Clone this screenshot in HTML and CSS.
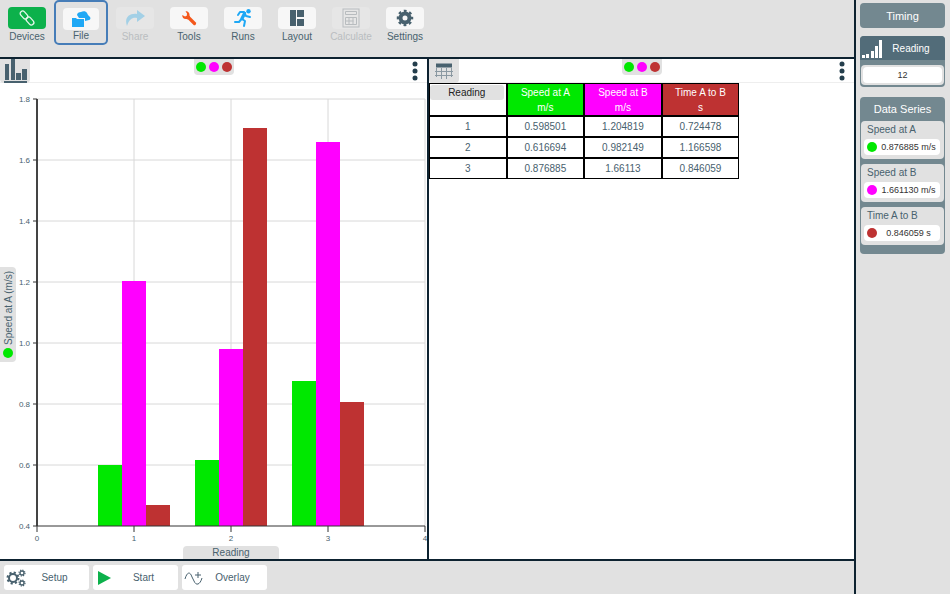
FILE: index.html
```html
<!DOCTYPE html>
<html lang="en">
  <head>
    <meta charset="UTF-8" />
    <meta name="viewport" content="width=device-width, initial-scale=1" />
    <title>Timing | Readings</title>
    <link rel="stylesheet" href="styles.css">
  </head>
  <body>
    <div class="workspace">
      <!-- Toolbar -->
      <nav class="toolbar">
        <button class="tool devices">
          <span class="tool-icon">
            <svg width="18" height="18" viewBox="0 0 18 18" fill="none" stroke="#e6f7ec" stroke-width="1.3" stroke-linecap="round">
              <rect x="1.500" y="3.500" width="9" height="5" rx="2.500" transform="rotate(48 6 6)" />
              <rect x="7.500" y="9.500" width="9" height="5" rx="2.500" transform="rotate(48 12 12)" />
            </svg>
          </span>
          <span>Devices</span>
        </button>
        <button class="tool selected">
          <span class="tool-icon">
            <svg width="20" height="18" viewBox="0 0 20 18" fill="#1fa8f5">
              <path d="M1 8h4l1 1h7v8H1z" />
              <path d="M6 5c0-2 2-3 4-3 2-1 5-1 6 1l1 2 2 2c1 1 0 3-1 3l-4 1V8H8z" />
            </svg>
          </span>
          <span>File</span>
        </button>
        <button class="tool" disabled>
          <span class="tool-icon">
            <svg width="20" height="18" viewBox="0 0 20 18" fill="#a3d0e6">
              <path d="M12 1l8 6-8 6V9C8 8 4 10 2 17-1 9 4 4 12 5z" />
            </svg>
          </span>
          <span>Share</span>
        </button>
        <button class="tool">
          <span class="tool-icon">
            <svg width="16" height="16" viewBox="0 0 16 16">
              <path d="M7 7l6.500 6.500" stroke="#f4581c" stroke-width="3.200" stroke-linecap="round" />
              <path d="M4.500 1.200C7 1 9 3 8.500 5.500L9 7 7 9.500 5.500 9C3 9.500 1 7.500 1.200 5L4 6.500 5.800 5.800 6 3.500z" fill="#f4581c" />
            </svg>
          </span>
          <span>Tools</span>
        </button>
        <button class="tool">
          <span class="tool-icon">
            <svg width="20" height="20" viewBox="0 0 20 20" fill="none" stroke="#1fa8f5" stroke-width="2" stroke-linecap="round" stroke-linejoin="round">
              <circle cx="15.500" cy="3.200" r="2.200" fill="#1fa8f5" stroke="none" />
              <path d="M5 7l2-3h4l2 4 4 1M12 5l-3 6 3 2-1 5M8.500 11L6 14H2" />
              <path d="M11.500 5.500l-2.500 5" stroke-width="3.200" />
            </svg>
          </span>
          <span>Runs</span>
        </button>
        <button class="tool">
          <span class="tool-icon">
            <svg width="14" height="16" viewBox="0 0 14 16" fill="#48616e">
              <path d="M0 0h6v16H0zM7 0h7v7H7zM7 9h7v7H7z" />
            </svg>
          </span>
          <span>Layout</span>
        </button>
        <button class="tool" disabled>
          <span class="tool-icon">
            <svg width="18" height="20" viewBox="0 0 18 20" fill="none" stroke="#b8bcbf">
              <rect x="1" y="1" width="16" height="18" />
              <path d="M3.500 3.500h11v3h-11zM3.500 9.500h11v7h-11zM3.500 13h8M7 9.500v7M11 9.500v7" />
            </svg>
          </span>
          <span>Calculate</span>
        </button>
        <button class="tool">
          <span class="tool-icon">
            <svg width="18" height="18" viewBox="-9 -9 18 18" stroke="#48616e" fill="none">
              <circle r="4.500" stroke-width="4" />
              <circle r="7" stroke-width="2.500" stroke-dasharray="2.750 2.748" stroke-dashoffset="1.400" />
            </svg>
          </span>
          <span>Settings</span>
        </button>
      </nav>

      <!-- Chart and table panels -->
      <main class="panels">
        <section class="panel">
          <header class="panel-head">
            <button class="view-btn" aria-label="Chart view">
              <svg width="24" height="24" viewBox="0 0 24 24" fill="#48616e">
                <path d="M2 5h4v16H2zM8 0h4v21H8zM13 14h5v7h-5zM19 10h5v11h-5zM1 22h23v2H1z" />
              </svg>
            </button>
            <div class="series-dots">
              <span class="dot green"></span>
              <span class="dot magenta"></span>
              <span class="dot red"></span>
            </div>
            <button class="more-btn" aria-label="Chart options">
              <svg width="6" height="20" viewBox="0 0 6 20" fill="#243e4c">
                <circle cx="3" cy="3" r="2.500" /><circle cx="3" cy="10" r="2.500" /><circle cx="3" cy="17" r="2.500" />
              </svg>
            </button>
          </header>
          <div class="chart">
            <button class="axis-y"><span class="dot green"></span>Speed at A (m/s)</button>
            <svg class="plot" viewBox="0 0 411 463">
              <g class="grid">
                <path d="M21 16H409M21 77H409M21 138H409M21 199H409M21 260H409M21 321H409M21 382H409" />
                <path d="M118 16V443M215 16V443M312 16V443M409 16V443" />
              </g>
              <g class="bar-green">
                <rect x="82" y="382" width="24" height="61" />
                <rect x="179" y="377" width="24" height="66" />
                <rect x="276" y="298" width="24" height="145" />
              </g>
              <g class="bar-magenta">
                <rect x="106" y="198" width="24" height="245" />
                <rect x="203" y="266" width="24" height="177" />
                <rect x="300" y="59" width="24" height="384" />
              </g>
              <g class="bar-red">
                <rect x="130" y="422" width="24" height="21" />
                <rect x="227" y="45" width="24" height="398" />
                <rect x="324" y="319" width="24" height="124" />
              </g>
              <path class="axis-main" d="M21 16V443" />
              <path class="axis" d="M17 443H409M17 16h4M17 77h4M17 138h4M17 199h4M17 260h4M17 321h4M17 382h4M21 443v6M118 443v6M215 443v6M312 443v6M409 443v6" />
              <g class="ticks" text-anchor="end">
                <text x="14" y="19">1.8</text>
                <text x="14" y="80">1.6</text>
                <text x="14" y="141">1.4</text>
                <text x="14" y="202">1.2</text>
                <text x="14" y="263">1.0</text>
                <text x="14" y="324">0.8</text>
                <text x="14" y="385">0.6</text>
                <text x="14" y="446">0.4</text>
              </g>
              <g class="ticks" text-anchor="middle">
                <text x="21" y="458">0</text>
                <text x="118" y="458">1</text>
                <text x="215" y="458">2</text>
                <text x="312" y="458">3</text>
                <text x="409" y="458">4</text>
              </g>
            </svg>
            <button class="axis-x">Reading</button>
          </div>
        </section>

        <section class="panel">
          <header class="panel-head">
            <button class="view-btn" aria-label="Table view">
              <svg width="18" height="16" viewBox="0 0 18 16" fill="none" stroke="#8b99a2">
                <path d="M1.500 5v9M6.500 5v11M11.500 5v11M16.500 5v9M0 8.500h18M0 12.500h18" />
                <path d="M1 2.500h16" stroke="#48616e" stroke-width="4" />
              </svg>
            </button>
            <div class="series-dots">
              <span class="dot green"></span>
              <span class="dot magenta"></span>
              <span class="dot red"></span>
            </div>
            <button class="more-btn" aria-label="Table options">
              <svg width="6" height="20" viewBox="0 0 6 20" fill="#243e4c">
                <circle cx="3" cy="3" r="2.500" /><circle cx="3" cy="10" r="2.500" /><circle cx="3" cy="17" r="2.500" />
              </svg>
            </button>
          </header>
          <table class="readings">
            <thead>
              <tr>
                <th><span class="col-label">Reading</span></th>
                <th class="green">Speed at A<br>m/s</th>
                <th class="magenta">Speed at B<br>m/s</th>
                <th class="red">Time A to B<br>s</th>
              </tr>
            </thead>
            <tbody>
              <tr><td>1</td><td>0.598501</td><td>1.204819</td><td>0.724478</td></tr>
              <tr><td>2</td><td>0.616694</td><td>0.982149</td><td>1.166598</td></tr>
              <tr><td>3</td><td>0.876885</td><td>1.66113</td><td>0.846059</td></tr>
            </tbody>
          </table>
        </section>
      </main>

      <!-- Bottom actions -->
      <footer class="actions">
        <button class="action">
          <svg width="20" height="18" viewBox="0 0 20 18" fill="none" stroke="#48616e">
            <circle cx="7" cy="9" r="4" stroke-width="2" />
            <circle cx="7" cy="9" r="5.500" stroke-width="2" stroke-dasharray="2.160 2.160" />
            <circle cx="16" cy="4" r="2" stroke-width="1.300" />
            <circle cx="16" cy="4" r="3" stroke-width="1.200" stroke-dasharray="1.180 1.180" />
            <circle cx="16" cy="14" r="2" stroke-width="1.300" />
            <circle cx="16" cy="14" r="3" stroke-width="1.200" stroke-dasharray="1.180 1.180" />
          </svg>
          <span>Setup</span>
        </button>
        <button class="action">
          <svg width="20" height="18" viewBox="0 0 20 18" fill="#0cb14b">
            <path d="M3 2l13 7-13 7z" />
          </svg>
          <span>Start</span>
        </button>
        <button class="action">
          <svg width="20" height="18" viewBox="0 0 20 18" fill="none" stroke="#48616e">
            <path d="M1 10C3 3 6 2 8 8l2 4c2 5 6 4 8-3" />
            <path d="M11 6h6M14 3v6" />
          </svg>
          <span>Overlay</span>
        </button>
      </footer>
    </div>

    <!-- Sidebar -->
    <aside class="sidebar">
      <button class="timing">Timing</button>

      <section class="card">
        <h2 class="card-head">
          <svg width="21" height="19" viewBox="0 0 21 19" fill="#fff">
            <path d="M0 16h3v3H0zM4 15h3v4H4zM9 12h3v7H9zM13 7h3v12h-3zM17 1h3v18h-3z" />
          </svg>
          <span>Reading</span>
        </h2>
        <div class="card-body">
          <div class="value">12</div>
        </div>
      </section>

      <section class="series">
        <h2>Data Series</h2>
        <div class="series-item">
          <h3>Speed at A</h3>
          <div class="value"><span class="dot green"></span><span class="num">0.876885 m/s</span></div>
        </div>
        <div class="series-item">
          <h3>Speed at B</h3>
          <div class="value"><span class="dot magenta"></span><span class="num">1.661130 m/s</span></div>
        </div>
        <div class="series-item">
          <h3>Time A to B</h3>
          <div class="value"><span class="dot red"></span><span class="num">0.846059 s</span></div>
        </div>
      </section>
    </aside>
  </body>
</html>
```
FILE: styles.css
```css
* {
  box-sizing: border-box;
}

body {
  margin: 0;
  min-height: 100vh;
  display: flex;
  font-family: "Liberation Sans", Arial, sans-serif;
  font-size: 10px;
  color: #48616e;
  background: #e1e1e1;
}

button {
  font: inherit;
  color: inherit;
  border: none;
  padding: 0;
  background: none;
  cursor: pointer;
}

h2,
h3 {
  margin: 0;
  font-weight: normal;
}

.dot {
  width: 10px;
  height: 10px;
  border-radius: 50%;
  flex: none;
}

.green {
  background: #00e800;
}

.magenta {
  background: #ff00ff;
}

.red {
  background: #be3232;
}

.workspace {
  flex: 1;
  min-width: 0;
  display: flex;
  flex-direction: column;
  border-right: 2px solid #0d2230;
}

/* Toolbar */
.toolbar {
  display: flex;
  height: 57px;
}

.tool {
  width: 54px;
  height: 45px;
  padding-top: 7px;
  display: flex;
  flex-direction: column;
  align-items: center;
  gap: 1px;
  line-height: 14px;
}

.tool-icon {
  width: 38px;
  height: 22px;
  display: flex;
  align-items: center;
  justify-content: center;
  border-radius: 4px;
  background: #f7f7f7;
}

.devices .tool-icon {
  background: #0cb14b;
}

.tool.selected {
  gap: 0;
  padding-top: 6px;
  border: 2px solid #467db8;
  border-radius: 5px;
}

.tool.selected .tool-icon {
  width: 36px;
}

.tool.selected span:last-child {
  line-height: 12px;
}

.tool:disabled {
  color: #b9bdc0;
}

.tool:disabled .tool-icon {
  background: #e6e6e6;
}

/* Panels */
.panels {
  flex: 1;
  display: grid;
  grid-template-columns: 1fr 1fr;
  border-top: 2px solid #0d2230;
  border-bottom: 2px solid #0d2230;
}

.panel {
  min-width: 0;
  display: flex;
  flex-direction: column;
  background: #fff;
}

.panel + .panel {
  border-left: 2px solid #0d2230;
}

.panel-head {
  display: grid;
  grid-template-columns: 1fr auto 1fr;
  align-items: start;
  height: 24px;
  border-bottom: 1px solid #eee;
}

.view-btn {
  width: 30px;
  height: 24px;
  display: flex;
  align-items: center;
  justify-content: center;
  border-radius: 0 0 4px 4px;
  background: #e1e1e1;
}

.series-dots {
  display: flex;
  gap: 3px;
  padding: 3px 2px;
  border-radius: 0 0 4px 4px;
  background: #e1e1e1;
}

.more-btn {
  justify-self: end;
  padding: 2px 9px 0;
}

.more-btn svg {
  display: block;
}

/* Chart */
.chart {
  flex: 1;
  display: grid;
  grid-template-columns: 16px 1fr;
  grid-template-rows: 1fr auto;
}

.axis-y {
  align-self: center;
  width: 16px;
  padding: 4px 0;
  display: flex;
  align-items: center;
  gap: 3px;
  writing-mode: vertical-rl;
  transform: rotate(180deg);
  border-radius: 4px 0 0 4px;
  background: #e1e1e1;
}

.plot {
  display: block;
  width: 100%;
}

.axis-x {
  grid-column: 2;
  justify-self: center;
  width: 96px;
  height: 13px;
  margin-left: 19px;
  border-radius: 4px 4px 0 0;
  background: #e1e1e1;
}

.grid {
  fill: none;
  stroke: #d8d8d8;
}

.axis {
  fill: none;
  stroke: #333;
}

.axis-main {
  stroke: #444;
  stroke-width: 2;
}

.ticks {
  font-size: 8px;
  fill: #48616e;
}

.bar-green {
  fill: #00e800;
}

.bar-magenta {
  fill: #ff00ff;
}

.bar-red {
  fill: #be3232;
}

/* Readings table */
.readings {
  width: 73%;
  table-layout: fixed;
  border-collapse: separate;
  border-spacing: 0;
  text-align: center;
}

.readings th,
.readings td {
  height: 21px;
  padding: 0;
  border: 1px solid #000;
  font-weight: normal;
}

.readings th {
  height: 33px;
  line-height: 15px;
  color: #fff;
  vertical-align: top;
  padding-top: 1px;
}

.col-label {
  display: block;
  margin-right: 2px;
  border-radius: 3px;
  color: #222;
  background: #e1e1e1;
}

/* Bottom actions */
.actions {
  display: flex;
  gap: 4px;
  padding: 4px;
}

.action {
  width: 85px;
  height: 25px;
  padding: 0 2px;
  display: flex;
  align-items: center;
  border-radius: 3px;
  background: #fff;
}

.action span {
  flex: 1;
  padding-right: 4px;
}

/* Sidebar */
.sidebar {
  width: 94px;
  padding: 3px 5px 0 4px;
  display: flex;
  flex-direction: column;
}

.timing {
  height: 25px;
  font-size: 11px;
  color: #fff;
  border-radius: 4px;
  background: #738890;
}

.card {
  margin-top: 8px;
  border-radius: 4px;
  overflow: hidden;
  background: #738890;
}

.card-head {
  height: 24px;
  padding-left: 2px;
  display: flex;
  align-items: center;
  font-size: 10px;
  color: #fff;
  background: #526c79;
}

.card-head svg {
  align-self: flex-end;
  margin-bottom: 2px;
}

.card-head span {
  flex: 1;
  padding-right: 6px;
  text-align: center;
}

.card-body {
  margin: 5px 1px 2px;
  padding: 2px;
  border-radius: 4px;
  background: #e1e1e1;
}

.value {
  height: 16px;
  display: flex;
  align-items: center;
  justify-content: center;
  font-size: 9px;
  color: #333;
  border-radius: 4px;
  background: #fff;
}

.series {
  margin-top: 10px;
  padding: 0 1px 4px;
  border-radius: 4px;
  background: #738890;
}

.series h2 {
  height: 24px;
  line-height: 24px;
  font-size: 11px;
  text-align: center;
  color: #fff;
}

.series-item {
  height: 38px;
  margin-bottom: 5px;
  padding: 0 4px 0 3px;
  border-radius: 4px;
  background: #e1e1e1;
}

.series-item h3 {
  height: 18px;
  padding-left: 3px;
  line-height: 18px;
  font-size: 10px;
}

.series-item .value {
  padding-left: 3px;
}

.num {
  flex: 1;
  text-align: center;
}
```
